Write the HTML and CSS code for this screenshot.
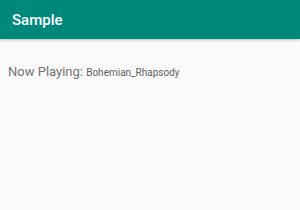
FILE: index.html
```html
<!DOCTYPE html>
<html lang="en">
<head>
    <meta charset="UTF-8">
    <meta name="viewport" content="width=device-width, initial-scale=1.0">
    <title>Sample</title>
    <link rel="stylesheet" href="styles.css">
</head>
<body>
    <header class="app-bar">
        <h1>Sample</h1>
    </header>
    <main class="content">
        <p class="now-playing">Now Playing: <span class="track">Bohemian_Rhapsody</span></p>
    </main>
</body>
</html>
```

FILE: styles.css
```css
body {
    margin: 0;
    font-family: Roboto, 'Noto Sans', sans-serif;
    background-color: #fafafa;
    width: 300px;
    height: 210px;
    overflow: hidden;
}

.app-bar {
    height: 39px;
    background-color: #00897b;
    display: flex;
    align-items: center;
    padding: 0 12px;
    box-shadow: 0 1px 3px rgba(0, 0, 0, 0.25);
}

.app-bar h1 {
    margin: 0;
    color: #fff;
    font-size: 15px;
    font-weight: 500;
}

.content {
    padding: 25px 8px;
}

.now-playing {
    margin: 0;
    color: #737373;
    font-size: 13px;
}

.track {
    font-size: 10px;
    color: #5f5f5f;
}
```
